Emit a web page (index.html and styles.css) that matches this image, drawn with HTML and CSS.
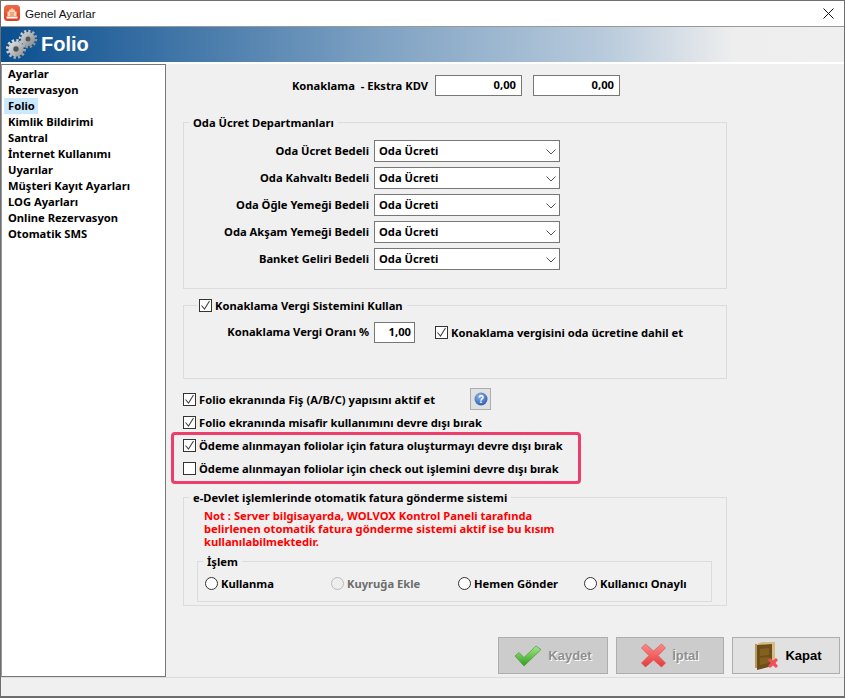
FILE: index.html
```html
<!DOCTYPE html>
<html lang="tr">
<head>
<meta charset="utf-8">
<title>Genel Ayarlar</title>
<link rel="stylesheet" href="styles.css">
</head>
<body>
<div class="window">
  <div class="titlebar">
    <svg class="app-icon" width="16" height="16" viewBox="0 0 16 16"><defs><linearGradient id="ag" x1="0" y1="0" x2="0" y2="1"><stop offset="0" stop-color="#ee6a45"/><stop offset="1" stop-color="#dc3f22"/></linearGradient></defs><rect width="16" height="16" rx="3.500" fill="url(#ag)"/><path d="M8 2.500l1 2h1.500l.5 2H12.500V11h-9V6.500H5l.5-2H7z" fill="#f9d9b4"/><path d="M6.500 7h1v4h-1zM8.500 7h1v4h-1z" fill="#e8704a"/><path d="M2.500 11.500h11V13.500h-11z" fill="#fff"/></svg>
    <span class="title-text">Genel Ayarlar</span>
    <svg class="close" width="11" height="11" viewBox="0 0 11 11"><path d="M.5.500l10 10M10.500.500l-10 10" stroke="#111" fill="none"/></svg>
  </div>
  <div class="banner">
    <svg class="gears" width="32" height="32" viewBox="0 0 32 32">
      <defs>
        <linearGradient id="g1" x1="0" y1="0" x2="1" y2="1"><stop offset="0" stop-color="#d6d7d8"/><stop offset="1" stop-color="#85888b"/></linearGradient>
        <linearGradient id="g2" x1="0" y1="0" x2="1" y2="1"><stop offset="0" stop-color="#e6e7e8"/><stop offset="1" stop-color="#8e9194"/></linearGradient>
      </defs>
      <circle cx="22" cy="10" r="7.800" fill="none" stroke="url(#g1)" stroke-width="3" stroke-dasharray="2.200 1.885"/>
      <circle cx="22" cy="10" r="7" fill="url(#g1)"/>
      <circle cx="22" cy="10" r="2.500" fill="#55585b"/>
      <circle cx="10" cy="20" r="8.500" fill="none" stroke="url(#g2)" stroke-width="3" stroke-dasharray="2.400 2.050"/>
      <circle cx="10" cy="20" r="7.600" fill="url(#g2)"/>
      <circle cx="10" cy="20" r="2.700" fill="#505356"/>
    </svg>
    <span class="banner-title">Folio</span>
  </div>
  <div class="content">
    <ul class="nav">
      <li>Ayarlar</li>
      <li>Rezervasyon</li>
      <li class="nav-active">Folio</li>
      <li>Kimlik Bildirimi</li>
      <li>Santral</li>
      <li>İnternet Kullanımı</li>
      <li>Uyarılar</li>
      <li>Müşteri Kayıt Ayarları</li>
      <li>LOG Ayarları</li>
      <li>Online Rezervasyon</li>
      <li>Otomatik SMS</li>
    </ul>
    <main class="main">
      <div class="kdv-row">
        <span class="kdv-label">Konaklama&nbsp; - Ekstra KDV</span>
        <div class="input kdv-input">0,00</div>
        <div class="input kdv-input">0,00</div>
      </div>

      <section class="group group-dept">
        <div class="legend">Oda Ücret Departmanları</div>
        <div class="form-row"><span class="form-label">Oda Ücret Bedeli</span><div class="select">Oda Ücreti<svg class="chev" width="10" height="6" viewBox="0 0 10 6"><path d="M.5.500l4.500 4.500L9.500.500" fill="none" stroke="#555"/></svg></div></div>
        <div class="form-row"><span class="form-label">Oda Kahvaltı Bedeli</span><div class="select">Oda Ücreti<svg class="chev" width="10" height="6" viewBox="0 0 10 6"><path d="M.5.500l4.500 4.500L9.500.500" fill="none" stroke="#555"/></svg></div></div>
        <div class="form-row"><span class="form-label">Oda Öğle Yemeği Bedeli</span><div class="select">Oda Ücreti<svg class="chev" width="10" height="6" viewBox="0 0 10 6"><path d="M.5.500l4.500 4.500L9.500.500" fill="none" stroke="#555"/></svg></div></div>
        <div class="form-row"><span class="form-label">Oda Akşam Yemeği Bedeli</span><div class="select">Oda Ücreti<svg class="chev" width="10" height="6" viewBox="0 0 10 6"><path d="M.5.500l4.500 4.500L9.500.500" fill="none" stroke="#555"/></svg></div></div>
        <div class="form-row"><span class="form-label">Banket Geliri Bedeli</span><div class="select">Oda Ücreti<svg class="chev" width="10" height="6" viewBox="0 0 10 6"><path d="M.5.500l4.500 4.500L9.500.500" fill="none" stroke="#555"/></svg></div></div>
      </section>

      <section class="group group-tax">
        <div class="legend legend-check"><span class="check checked"><svg width="11" height="11" viewBox="0 0 11 11"><path d="M1.500 5.500l3 3.500 5-8" fill="none" stroke="#444" stroke-width="1.100"/></svg></span>Konaklama Vergi Sistemini Kullan</div>
        <div class="tax-row">
          <span class="form-label">Konaklama Vergi Oranı %</span>
          <div class="input tax-input">1,00</div>
          <label class="check-line tax-check"><span class="check checked"><svg width="11" height="11" viewBox="0 0 11 11"><path d="M1.500 5.500l3 3.500 5-8" fill="none" stroke="#444" stroke-width="1.100"/></svg></span>Konaklama vergisini oda ücretine dahil et</label>
        </div>
      </section>

      <div class="options">
        <div class="option-help">
          <label class="check-line opt-first"><span class="check checked"><svg width="11" height="11" viewBox="0 0 11 11"><path d="M1.500 5.500l3 3.500 5-8" fill="none" stroke="#444" stroke-width="1.100"/></svg></span>Folio ekranında Fiş (A/B/C) yapısını aktif et</label>
          <div class="help-btn"><svg width="14" height="14" viewBox="0 0 14 14"><defs><radialGradient id="hg" cx=".4" cy=".3" r=".8"><stop offset="0" stop-color="#8fb4e6"/><stop offset="1" stop-color="#1f56a8"/></radialGradient></defs><circle cx="7" cy="7" r="6.500" fill="url(#hg)"/><text x="7" y="10.500" text-anchor="middle" class="help-q">?</text></svg></div>
        </div>
        <label class="check-line opt-second"><span class="check checked"><svg width="11" height="11" viewBox="0 0 11 11"><path d="M1.500 5.500l3 3.500 5-8" fill="none" stroke="#444" stroke-width="1.100"/></svg></span>Folio ekranında misafir kullanımını devre dışı bırak</label>
        <div class="highlight">
          <label class="check-line"><span class="check checked"><svg width="11" height="11" viewBox="0 0 11 11"><path d="M1.500 5.500l3 3.500 5-8" fill="none" stroke="#444" stroke-width="1.100"/></svg></span>Ödeme alınmayan foliolar için fatura oluşturmayı devre dışı bırak</label>
          <label class="check-line"><span class="check"></span>Ödeme alınmayan foliolar için check out işlemini devre dışı bırak</label>
        </div>
      </div>

      <section class="group group-edev">
        <div class="legend">e-Devlet işlemlerinde otomatik fatura gönderme sistemi</div>
        <p class="note">Not : Server bilgisayarda, WOLVOX Kontrol Paneli tarafında<br>belirlenen otomatik fatura gönderme sistemi aktif ise bu kısım<br>kullanılabilmektedir.</p>
        <section class="group group-islem">
          <div class="legend legend-islem">İşlem</div>
          <div class="radios">
            <label class="radio-line r1"><span class="radio"></span>Kullanma</label>
            <label class="radio-line r2 disabled"><span class="radio"></span>Kuyruğa Ekle</label>
            <label class="radio-line r3"><span class="radio"></span>Hemen Gönder</label>
            <label class="radio-line r4"><span class="radio"></span>Kullanıcı Onaylı</label>
          </div>
        </section>
      </section>

      <div class="actions">
        <div class="btn btn-disabled btn-save"><svg width="28" height="22" viewBox="0 0 28 22"><defs><linearGradient id="gg" x1="0" y1="0" x2="0" y2="1"><stop offset="0" stop-color="#a4e88a"/><stop offset="1" stop-color="#2f9e1e"/></linearGradient></defs><path d="M1 11l4-3.500 5 5L22 1l5 3.500L10 21z" fill="url(#gg)" stroke="#4c9a3a" stroke-width=".7"/></svg><span>Kaydet</span></div>
        <div class="btn btn-disabled btn-cancel"><svg width="25" height="25" viewBox="0 0 25 25"><defs><linearGradient id="rg" x1="0" y1="0" x2="0" y2="1"><stop offset="0" stop-color="#fb8a8a"/><stop offset="1" stop-color="#e83a3a"/></linearGradient></defs><path d="M4.500 1L12.500 8l8-7 4 4-7.500 7.500L24.500 20l-4 4-8-7-8 7-4-4L8 12.500.500 5z" fill="url(#rg)" stroke="#cf4b4b" stroke-width=".6"/></svg><span>İptal</span></div>
        <div class="btn btn-close"><svg width="24" height="30" viewBox="0 0 24 30"><path d="M0 3h2v24H0z" fill="#b59a5e"/><path d="M2 3l5-2h13v23h-3V4H3z" fill="#d4bd82"/><path d="M2 4l15-1v22L2 29z" fill="#6f4d1a"/><path d="M5 8l9-1v7l-9 1zM5 17l9-1v6l-9 2z" fill="#84601f"/><path d="M13 19l2-2 3 2.500 3-2.500 2 2-2.500 3 2.500 3-2 2-3-2.500-3 2.500-2-2 2.500-3z" fill="#f0505a"/></svg><span>Kapat</span></div>
      </div>
    </main>
  </div>
  <div class="statusbar"></div>
</div>
</body>
</html>
```
FILE: styles.css
```css
* { box-sizing: border-box; }
html, body { margin: 0; padding: 0; }
body { width: 845px; height: 698px; overflow: hidden; background: #f0f0f0; font-family: "Noto Sans", Tahoma, sans-serif; font-size: 11.2px; font-weight: 700; color: #000; }
.window { width: 845px; height: 698px; border: 1px solid #6e6e6e; border-bottom-width: 2px; display: flex; flex-direction: column; background: #f0f0f0; }
.titlebar { height: 26px; flex: none; background: #fff; border-bottom: 1px solid #999; display: flex; align-items: center; padding: 0 10px 1px 3px; }
.app-icon { flex: none; }
.title-text { margin-left: 5px; font-family: "Liberation Sans", sans-serif; font-weight: 400; font-size: 11.7px; flex: 1; color: #111; }
.close { flex: none; }
.banner { height: 35px; flex: none; background: linear-gradient(90deg, #0a4f8f 0%, #7fa2c3 45%, #b9cbdc 72%, #eeeeee 87%, #efefef 100%); display: flex; align-items: center; padding-left: 5px; }
.gears { flex: none; }
.banner-title { margin-left: 3px; font-size: 20px; color: #fff; font-family: "Liberation Sans", sans-serif; }
.content { flex: 1; display: flex; padding-top: 2px; border-bottom: 1px solid #dcdcdc; background: linear-gradient(#fff 2px, #f0f0f0 2px); min-height: 0; }
.nav { width: 165px; flex: none; margin: 0; padding: 1px 0 0 2px; list-style: none; background: #fff; border: 1px solid #777; border-left-color: #999; line-height: 16px; }
.nav li { height: 16px; padding-left: 4px; }
.nav .nav-active { width: 34px; background: #cce8ff; }
.main { flex: 1; padding: 11px 0 0 17px; display: flex; flex-direction: column; min-width: 0; }
.kdv-row { display: flex; align-items: center; height: 21px; padding-left: 107px; }
.kdv-label { width: 138px; text-align: right; margin-right: 7px; white-space: nowrap; }
.input { background: #fff; border: 1px solid #777; padding-right: 3px; display: flex; align-items: center; justify-content: flex-end; padding-bottom: 2px; }
.kdv-input { width: 87px; height: 21px; margin-right: 11px; padding-right: 5px; }
.group { border: 1px solid #dcdcdc; position: relative; }
.legend { position: absolute; top: -8px; left: 5px; padding: 0 4px; background: #f0f0f0; line-height: 15px; white-space: nowrap; }
.group-dept { width: 544px; height: 167px; margin-top: 26px; padding-top: 17px; }
.form-row { display: flex; align-items: center; height: 22px; margin-bottom: 5px; }
.form-label { width: 185px; text-align: right; white-space: nowrap; flex: none; padding-bottom: 2px; }
.select { position: relative; margin-left: 5px; width: 186px; height: 22px; background: #fff; border: 1px solid #777; padding: 0 0 2px 4px; display: flex; align-items: center; }
.chev { position: absolute; right: 3px; top: 8px; }
.group-tax { width: 544px; height: 74px; margin-top: 16px; padding-top: 16px; }
.legend-check { display: flex; align-items: center; left: 13px; padding: 0 4px 0 2px; }
.legend-check .check { margin-right: 3px; }
.tax-row { display: flex; align-items: center; height: 21px; }
.tax-input { width: 41px; height: 21px; margin-left: 5px; }
.tax-check { margin-left: 20px; }
.check { width: 13px; height: 13px; flex: none; background: #fff; border: 1px solid #333; display: flex; align-items: center; justify-content: center; margin-right: 3px; }
.check svg { display: block; }
.check-line { display: flex; align-items: center; height: 16px; white-space: nowrap; }
.options { margin-top: 9px; display: flex; flex-direction: column; }
.option-help { display: flex; align-items: center; height: 22px; }
.opt-first { margin-top: 1px; }
.help-btn { width: 21px; height: 22px; margin-left: 35px; border: 1px solid #adadad; background: #e1e1e1; display: flex; align-items: center; justify-content: center; }
.help-q { font-family: "Liberation Sans", sans-serif; font-size: 10px; font-weight: 700; fill: #fff; }
.opt-second { margin-top: 4px; height: 16px; }
.highlight { margin: 2px 0 0 -12px; width: 410px; height: 52px; border: 3px solid #ee3d6b; border-radius: 4px; padding: 2px 0 0 9px; display: flex; flex-direction: column; gap: 7px; }
.group-edev { width: 544px; height: 109px; margin-top: 13px; padding: 11px 0 0 20px; }
.note { margin: 0; color: #f00; line-height: 13px; white-space: nowrap; }
.group-islem { position: absolute; left: 13px; top: 63px; width: 515px; height: 41px; }
.radios { position: relative; display: flex; height: 100%; align-items: center; padding-top: 3px; padding-left: 7px; }
.radio-line { display: flex; align-items: center; white-space: nowrap; flex: none; }
.r1 { width: 126px; } .r2 { width: 127px; } .r3 { width: 126px; }
.radio { width: 13px; height: 13px; border: 1px solid #333; border-radius: 50%; background: #fff; margin-right: 3px; flex: none; }
.disabled { color: #6d6d6d; }
.disabled .radio { border-color: #bbb; background: #eee; }
.actions { display: flex; margin-top: 31px; padding-left: 315px; gap: 8px; }
.btn { width: 110px; height: 37px; border: 1px solid #adadad; display: flex; align-items: center; justify-content: center; gap: 6px; font-family: "Liberation Sans", sans-serif; font-size: 13px; font-weight: 700; }
.btn-disabled { background: #cccccc; color: #8f8f8f; text-shadow: 1px 1px 0 #fff; }
.btn-cancel, .btn-close { width: 108px; }
.btn-close { background: #e1e1e1; padding-left: 5px; }
.statusbar { height: 18px; flex: none; }
```
